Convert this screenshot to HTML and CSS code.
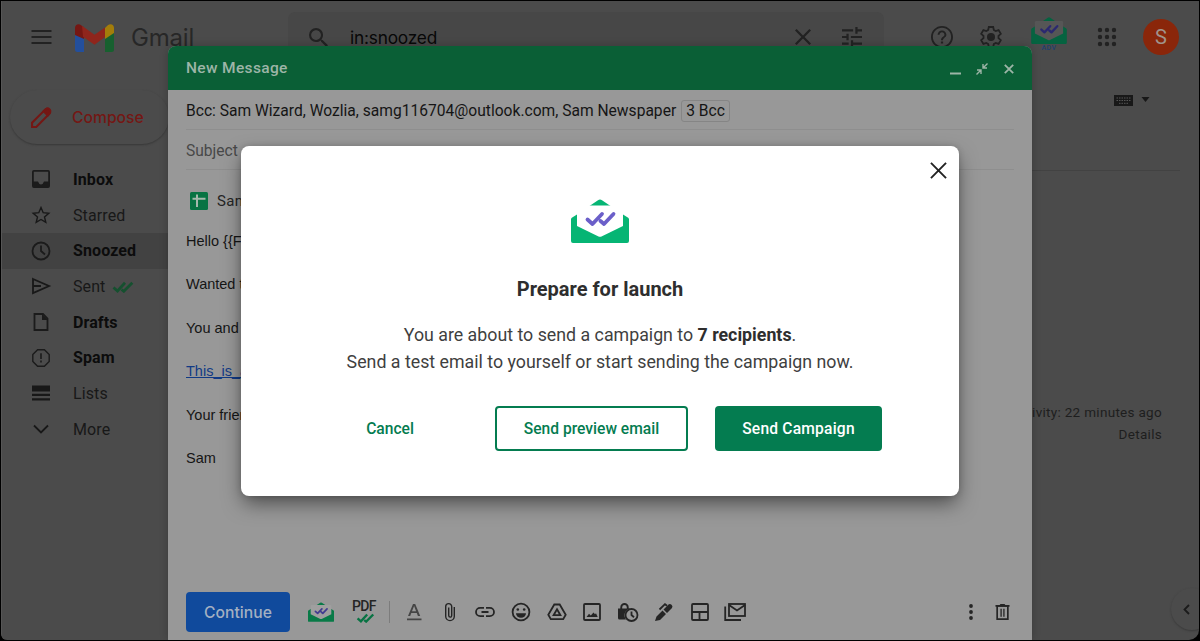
FILE: index.html
```html
<!DOCTYPE html>
<html>
<head>
	<meta charset="utf-8">
	<title>Gmail</title>
	<link rel="stylesheet" href="styles.css">
</head>
<body>
	<svg class="defs">
		<symbol id="envelope" viewBox="0 0 58 44">
			<path class="env-body" d="M17 8L27 1.2Q29 0 31 1.2L41 8zM6 15.5L.8 18.8Q0 19.3 0 20.5V42q0 2 2 2h54q2 0 2-2V20.500q0-1.200-.8-1.700L52 15.500z"/>
			<path class="env-paper" d="M8 6.500H50Q52 6.500 52 8.500V27L30.500 37.500Q29 38.200 27.500 37.500L6 27V8.500Q6 6.500 8 6.500z"/>
			<path class="env-check" d="M16.500 20.500l5 4.500L31 15M29.500 22l3.500 3 9.500-10"/>
		</symbol>
		<symbol id="checks" viewBox="0 0 22 12">
			<path d="M1.500 6.500l4 3.500L13 1.800M9.500 8.500l2.300 1.800 8.500-8.500" fill="none" stroke="currentColor" stroke-width="2.800"/>
		</symbol>
	</svg>

	<div class="app">
		<div class="topbar">
			<svg class="menu" viewBox="0 0 20 14"><path d="M0 1h20M0 7h20M0 13h20"/></svg>
			<svg class="logo" viewBox="0 0 39 29">
				<path fill="#234f9c" d="M0 12h9V29H2.500Q0 29 0 26.500z"/>
				<path fill="#17602f" d="M39 10h-9V29h6.500q2.500 0 2.500-2.500z"/>
				<path fill="#a37d0a" d="M30 5l2.500-2.500C35.500 0 39 1.500 39 5v5l-9 6z"/>
				<path fill="#751713" d="M0 12V5C0 1.500 3.700 0 6.500 2.500L9 4.500V16z"/>
				<path fill="#8f251c" d="M7 2.800l12.500 9L30 4.500V14l-10.500 7.800L8 13.700z"/>
			</svg>
			<span class="brand">Gmail</span>
			<div class="search">
				<svg class="icon" viewBox="3 3 17.500 17.500"><path d="M15.500 14h-.79l-.28-.27A6.470 6.470 0 0 0 16 9.500 6.500 6.500 0 1 0 9.500 16c1.610 0 3.090-.59 4.230-1.570l.27.28v.79l5 4.990L20.490 19l-4.990-5zm-6 0C7.010 14 5 11.990 5 9.500S7.010 5 9.500 5 14 7.010 14 9.500 11.990 14 9.500 14z"/></svg>
				<span class="query">in:snoozed</span>
				<svg class="clear" viewBox="5 5 14 14"><path d="M19 6.410L17.590 5 12 10.590 6.410 5 5 6.410 10.590 12 5 17.590 6.410 19 12 13.410 17.590 19 19 17.590 13.410 12z"/></svg>
				<svg class="tune" viewBox="3 3 18 18"><path d="M3 17v2h6v-2H3zM3 5v2h10V5H3zm10 16v-2h8v-2h-8v-2h-2v6h2zM7 9v2H3v2h4v2h2V9H7zm14 4v-2H11v2h10zm-6-4h2V7h4V5h-4V3h-2v6z"/></svg>
			</div>
			<svg class="help" viewBox="2 2 20 20"><path d="M11 18h2v-2h-2v2zm1-16C6.480 2 2 6.480 2 12s4.480 10 10 10 10-4.480 10-10S17.520 2 12 2zm0 18.300c-4.600 0-8.300-3.700-8.300-8.300S7.400 3.700 12 3.700s8.300 3.700 8.300 8.300-3.700 8.300-8.300 8.300zm0-14.300c-2.210 0-4 1.790-4 4h1.800c0-1.300 1-2.300 2.200-2.300s2.200 1 2.200 2.300c0 2-3.100 1.750-3.100 5h1.800c0-2.250 3.100-2.500 3.100-5 0-2.210-1.790-4-4-4z"/></svg>
			<svg class="gear" viewBox="0 0 24 24">
				<path class="line" d="M9.800 2h4.400l.6 3 1.900 1.100 2.900-1 2.200 3.800-2.300 2v2.200l2.300 2-2.200 3.800-2.900-1-1.900 1.100-.6 3H9.800l-.6-3-1.900-1.100-2.900 1-2.200-3.800 2.300-2v-2.200l-2.300-2 2.200-3.800 2.900 1L9.200 5z"/>
				<circle cx="12" cy="12" r="4"/>
			</svg>
			<div class="adv">
				<svg class="env"><use href="#envelope"/></svg>
				<span>ADV</span>
			</div>
			<svg class="apps" viewBox="0 0 18 18"><path d="M2 2h0M9 2h0M16 2h0M2 9h0M9 9h0M16 9h0M2 16h0M9 16h0M16 16h0"/></svg>
			<span class="avatar">S</span>
		</div>

		<div class="main">
			<div class="sidebar">
				<div class="compose">
					<svg viewBox="0 0 20 20"><path d="M1 19v-4L13.500 2.500q1.500-1.500 3 0l1 1q1.500 1.500 0 3L5 19z"/><path class="tip" d="M12 4l2.500-2.200q1.500-1 3 .4t.5 3L16 8z"/></svg>
					Compose
				</div>
				<ul class="nav">
					<li class="unread"><svg viewBox="0 0 20 20"><rect class="line" x="1.900" y="1.900" width="16.200" height="16.200" rx="1"/><path d="M2 12.500h5q1 3 3 3t3-3h5V18H2z"/></svg>Inbox</li>
					<li><svg viewBox="0 0 20 20"><path class="line thin" d="M10 2.500l2.200 5.200 5.600.5-4.300 3.700 1.300 5.500L10 14.500l-4.800 2.900 1.300-5.500L2.200 8.200l5.600-.5z"/></svg>Starred</li>
					<li class="unread active"><svg viewBox="0 0 20 20"><circle class="line" cx="10" cy="10" r="8.500"/><path class="line" d="M10 4.500V10l4 3.500"/></svg>Snoozed</li>
					<li><svg viewBox="0 0 20 20"><path class="line" d="M2 3l16 7-16 7zM2 10h8"/></svg>Sent<svg class="sent-checks"><use href="#checks"/></svg></li>
					<li class="unread"><svg viewBox="0 0 20 20"><path class="line" d="M3.500 2H12l4.500 4.500V18h-13z"/><path d="M11 2v6h6z"/></svg>Drafts</li>
					<li class="unread"><svg viewBox="0 0 20 20"><path class="line thin" d="M6.600 1.800h6.800l4.800 4.800v6.800l-4.800 4.800H6.600l-4.800-4.800V6.600z"/><path d="M9.200 5.200h1.600V11H9.200zM9.200 12.500h1.600v2H9.200z"/></svg>Spam</li>
					<li><svg viewBox="0 0 20 20"><path d="M1 2.500h18v6H1zM1 10.800h18V13H1zM1 15.300h18v2.200H1z"/></svg>Lists</li>
					<li><svg viewBox="0 0 20 20"><path class="line" d="M3 6.500l7 7 7-7"/></svg>More</li>
				</ul>
			</div>
			<div class="content">
				<div class="tools">
					<svg class="keyboard" viewBox="0 0 19 11"><path d="M0 0h19v11H0z"/><path class="keys" d="M2.500 3h14M2.500 5.500h14M5 8.300h9"/></svg>
					<svg class="caret" viewBox="0 0 8 5"><path d="M0 0h8L4 5z"/></svg>
				</div>
				<div class="activity">
					<div>Last account activity: 22 minutes ago</div>
					<div>Details</div>
				</div>
			</div>
		</div>
		<div class="panel-toggle"><svg viewBox="0 0 7 10"><path class="line" d="M6 .5L1.500 5 6 9.500"/></svg></div>
	</div>

	<div class="message">
		<div class="message-header">
			<span>New Message</span>
			<svg class="min" viewBox="0 0 11 12"><path d="M0 9.500h11v2H0z"/></svg>
			<svg class="shrink" viewBox="0 0 12 12"><path class="line thin" d="M11.500.5L7.500 4.500M7 1v4h4M.5 11.500l4-4M1 7h4v4"/></svg>
			<svg class="shut" viewBox="0 0 10 10"><path class="line" d="M.8.8l8.400 8.400M9.200.8L.8 9.200"/></svg>
		</div>
		<div class="field bcc"><span>Bcc: Sam Wizard, Wozlia, samg116704@outlook.com, Sam Newspaper</span><span class="count">3 Bcc</span></div>
		<div class="field subject">Subject</div>
		<div class="sheet">
			<svg viewBox="0 0 18 18"><rect width="18" height="18" rx="1.500" fill="#087343"/><path d="M7 2.500v12.500M2.500 6.700h13" stroke="#a5b9ad" stroke-width="2"/></svg>
			<span>Sam</span>
		</div>
		<div class="letter">
			<p>Hello {{First</p>
			<p>Wanted to</p>
			<p>You and</p>
			<p><a>This_is_a</a></p>
			<p>Your friend</p>
			<p>Sam</p>
		</div>
		<div class="toolbar">
			<button class="continue">Continue</button>
			<svg class="env"><use href="#envelope"/></svg>
			<div class="pdf">PDF<svg><use href="#checks"/></svg></div>
			<i class="divider"></i>
			<div class="icons">
				<svg viewBox="0 0 20 20"><path d="M9 2h2.200l5 12h-2.300l-1.100-2.900H7.300L6.200 14H4zM8 9.300h4.100L10.100 4zM3 16.500h14.500v1.700H3z" class="soft"/></svg>
				<svg viewBox="0 0 20 20"><path class="line thin" d="M14.300 5v9.300a4.300 4.300 0 0 1-8.600 0V4.600a3 3 0 0 1 6 0v9a1.500 1.500 0 0 1-3 0V5.500"/></svg>
				<svg viewBox="0 0 20 20"><path class="line" d="M9 5.800H5.200a4.200 4.200 0 0 0 0 8.400H9M11 5.800h3.800a4.200 4.200 0 0 1 0 8.400H11M6.500 10h7"/></svg>
				<svg viewBox="0 0 20 20"><circle class="line" cx="10" cy="10" r="8.400"/><circle cx="6.800" cy="7.500" r="1.300"/><circle cx="13.200" cy="7.500" r="1.300"/><path d="M5 11.200h10a5 4.500 0 0 1-10 0z"/></svg>
				<svg viewBox="0 0 20 20"><path class="line" d="M7.300 2.500h5.400l6 10.200-2.500 4.500H3.800l-2.500-4.500z"/><path class="line" d="M10 7.300l3.400 5.900H6.600z"/></svg>
				<svg viewBox="0 0 20 20"><rect class="line" x="2" y="2" width="16" height="16" rx="1"/><path d="M4.500 15l2.500-3.200 1.800 1.700 2.700-3 1.500 1.700 1-1 1.700 3.800z"/></svg>
				<svg class="wide" viewBox="0 0 22 20"><path d="M1 6.500h2.300V5.200a4.200 4.200 0 0 1 8.400 0v1.300h2A6.800 6.800 0 0 0 9 17.500H2.500Q1 17.500 1 16zM5.200 6.500h4.600V5.200a2.300 2.300 0 0 0-4.600 0z"/><circle class="line" cx="14.500" cy="13" r="6"/><path class="line" d="M14.500 9.500V13l2.500 2.200"/></svg>
				<svg viewBox="0 0 20 20"><path d="M1 19l1.500-4.500 6-6 3.500 3.500-6 6zM9.500 7.500l5-5q1.500-1 3 .3 1.700 1.600.5 3.200l-5 5z"/><path class="line" d="M5.500 7.500l5.500-5.300 2 1.500"/></svg>
				<svg viewBox="0 0 20 20"><rect class="line" x="2" y="2" width="16" height="16" rx="1"/><path class="line" d="M2 10h16M9.500 10v8"/></svg>
				<svg class="wide" viewBox="0 0 22 20"><rect class="line" x="5" y="2" width="16" height="12"/><path class="line" d="M5 3l8 5.500L21 3M1.200 4.500V18H17"/></svg>
			</div>
			<svg class="dots" viewBox="0 0 4 16"><circle cx="2" cy="2" r="1.900"/><circle cx="2" cy="8" r="1.900"/><circle cx="2" cy="14" r="1.900"/></svg>
			<svg class="trash" viewBox="0 0 16 18"><path class="line" d="M2.300 2.500h11.400V16.500H2.300z"/><path class="line thin" d="M6.500 5.500v8.500M9.500 5.500v8.500"/><path d="M.5 1.500H5l.8-1h4.400l.8 1h4.500v2H.5z"/></svg>
		</div>
	</div>

	<div class="modal">
		<svg class="close" viewBox="0 0 18 18"><path d="M1 1l16 16M17 1L1 17"/></svg>
		<svg class="env"><use href="#envelope"/></svg>
		<h3>Prepare for launch</h3>
		<p>You are about to send a campaign to <b>7 recipients</b>.<br>Send a test email to yourself or start sending the campaign now.</p>
		<div class="buttons">
			<button class="cancel">Cancel</button>
			<button class="preview">Send preview email</button>
			<button class="send">Send Campaign</button>
		</div>
	</div>
</body>
</html>
```

FILE: styles.css
```css
* {
	box-sizing: border-box;
}
body {
	margin: 0;
	width: 1200px;
	height: 641px;
	overflow: hidden;
	position: relative;
	background-color: #000;
	font-family: Roboto, sans-serif;
	color: #1b1b1b;
}
svg {
	display: block;
	flex: none;
	fill: currentColor;
	overflow: visible;
}
button {
	font-family: inherit;
	border: 0;
	padding: 0;
}
.defs {
	position: absolute;
	width: 0;
	height: 0;
}
.line {
	fill: none;
	stroke: currentColor;
	stroke-width: 1.8;
}
.thin {
	stroke-width: 1.4;
}
.env {
	--body: #087a47;
	--paper: #9f9f9f;
	--check: #413b90;
}
.env-body { fill: var(--body); }
.env-paper { fill: var(--paper); }
.env-check {
	fill: none;
	stroke: var(--check);
	stroke-width: 3.8;
	stroke-linecap: round;
	stroke-linejoin: round;
}

/* mailbox behind the compose window */
.app {
	position: relative;
	margin: 1px 1px 0 1px;
	height: 639px;
	overflow: hidden;
	background-color: #4b4b4b;
	border-radius: 0 0 10px 6px;
	border-left: 1px solid #565656;
}
.topbar {
	display: flex;
	align-items: center;
	height: 72px;
	padding-left: 29px;
	color: #222;
}
.menu {
	width: 21px;
	height: 14px;
	stroke: #222;
	stroke-width: 1.8;
}
.logo {
	width: 39px;
	height: 29px;
	margin-left: 23px;
}
.brand {
	width: 157px;
	margin-left: 17px;
	font-family: Inter, sans-serif;
	font-size: 24px;
	letter-spacing: -0.2px;
	color: #272727;
}
.search {
	display: flex;
	align-items: center;
	width: 596px;
	height: 50px;
	padding-left: 21px;
	background-color: #474747;
	border-radius: 7px;
}
.search .icon {
	width: 19px;
	height: 19px;
}
.query {
	width: 445px;
	margin-left: 22px;
	font-family: Inter, sans-serif;
	font-size: 17.3px;
	letter-spacing: -0.2px;
	color: #080808;
}
.clear {
	width: 16px;
	height: 16px;
}
.tune {
	width: 20px;
	height: 20px;
	margin-left: 31px;
}
.help {
	width: 22px;
	height: 22px;
	margin-left: 47px;
}
.gear {
	width: 24px;
	height: 24px;
	margin-left: 26px;
}
.adv {
	width: 36px;
	margin: -4px 0 0 28px;
	font-size: 7px;
	font-weight: 500;
	line-height: 9px;
	letter-spacing: .5px;
	text-align: center;
	color: #1d4070;
}
.adv .env {
	width: 36px;
	height: 27px;
	--body: #056340;
	--paper: #565656;
	--check: #2b2870;
}
.apps {
	width: 18px;
	height: 18px;
	margin-left: 31px;
	stroke: currentColor;
	stroke-width: 4.4;
	stroke-linecap: round;
}
.avatar {
	width: 36px;
	height: 36px;
	margin-left: 27px;
	border-radius: 50%;
	background-color: #8a260a;
	color: #a0938c;
	font-size: 20px;
	line-height: 36px;
	text-align: center;
}
.main {
	display: flex;
}
.sidebar {
	width: 167px;
	padding-top: 17px;
}
.compose {
	display: flex;
	align-items: center;
	width: 159px;
	height: 54px;
	margin-left: 8px;
	padding-left: 21px;
	border-radius: 27px;
	box-shadow: 0 1px 2px #383838;
	font-family: Inter, sans-serif;
	font-size: 15.7px;
	font-weight: 500;
	color: #741714;
}
.compose svg {
	width: 21px;
	height: 21px;
	margin-right: 20px;
	fill: none;
	stroke: #741714;
	stroke-width: 2;
}
.compose .tip {
	fill: #741714;
}
.nav {
	margin: 17.5px 0 0;
	padding: 0;
	list-style: none;
}
.nav li {
	display: flex;
	align-items: center;
	height: 35.7px;
	padding-left: 29px;
	font-size: 16px;
	letter-spacing: .1px;
	color: #181818;
}
.nav svg {
	width: 20px;
	height: 20px;
	margin-right: 22px;
}
.nav .sent-checks {
	width: 22px;
	height: 12px;
	margin: 2px 0 0 7px;
	color: #15502f;
}
.nav .unread {
	font-weight: 700;
	color: #0c0c0c;
}
.nav .unread svg {
	color: #1b1b1b;
}
.nav .active {
	background-color: #424242;
}
.content {
	flex: 1;
	padding-right: 37px;
}
.tools {
	display: flex;
	align-items: center;
	justify-content: flex-end;
	height: 98px;
	margin-right: -18px;
	padding: 0 30px 42px 0;
	border-bottom: 1px solid #424242;
	color: #181818;
}
.keyboard {
	width: 19px;
	height: 11px;
}
.keys {
	stroke: #555;
	stroke-width: 1;
	stroke-dasharray: 1.5 1;
}
.caret {
	width: 9px;
	height: 5px;
	margin: -3px 0 0 8px;
}
.activity {
	margin-top: 230px;
	font-size: 13.5px;
	line-height: 22px;
	letter-spacing: .3px;
	text-align: right;
	color: #1e1e1e;
}
.panel-toggle {
	position: absolute;
	right: -14px;
	bottom: 10px;
	display: flex;
	align-items: center;
	width: 42px;
	height: 42px;
	padding-left: 12px;
	border-radius: 50%;
	box-shadow: 0 1px 2px #3a3a3a;
}
.panel-toggle svg {
	width: 7px;
	height: 11px;
}

/* compose window */
.message {
	position: absolute;
	left: 168px;
	top: 46px;
	display: flex;
	flex-direction: column;
	width: 864px;
	height: 594px;
	border-radius: 8px 8px 0 0;
	background-color: #989898;
	box-shadow: 0 0 9px rgba(0, 0, 0, .22);
	clip-path: inset(-12px -12px 0 -12px);
	color: #151515;
}
.message-header {
	display: flex;
	align-items: center;
	height: 44px;
	padding: 0 18px;
	border-radius: 8px 8px 0 0;
	background-color: #0a5f36;
	font-size: 15.5px;
	font-weight: 500;
	letter-spacing: .35px;
	color: #9db5a7;
}
.message-header span {
	flex: 1;
}
.message-header svg {
	margin-top: 1px;
}
.min {
	width: 11px;
	height: 12px;
}
.shrink {
	width: 12px;
	height: 12px;
	margin-left: 15px;
}
.shut {
	width: 10px;
	height: 10px;
	margin-left: 16px;
}
.field {
	display: flex;
	align-items: center;
	height: 40px;
	margin: 0 18px;
	padding-top: 2px;
	border-bottom: 1px solid #8e8e8e;
	font-size: 15.6px;
}
.subject {
	color: #484848;
}
.count {
	margin-left: 5px;
	padding: 0 4px;
	border: 1px solid #858585;
	border-radius: 3px;
	line-height: 20px;
}
.sheet {
	display: flex;
	align-items: center;
	height: 62px;
	padding-left: 22px;
	font-size: 15px;
	letter-spacing: .3px;
	color: #252525;
}
.sheet svg {
	width: 18px;
	height: 18px;
	margin-right: 9px;
}
.letter {
	flex: 1;
	margin: -12.5px 18px 0;
	font-family: "Liberation Sans", sans-serif;
	font-size: 14.5px;
}
.letter p {
	margin: 0;
	line-height: 43.5px;
}
.letter a {
	color: #113a85;
	text-decoration: underline;
}
.toolbar {
	display: flex;
	align-items: center;
	height: 40px;
	margin: 0 22px 8px 18px;
	color: #252525;
}
.continue {
	width: 104px;
	height: 40px;
	border-radius: 4px;
	background-color: #104a9c;
	color: #a3b0c2;
	font-family: Inter, sans-serif;
	font-size: 15.7px;
	font-weight: 500;
}
.toolbar .env {
	width: 26px;
	height: 20px;
	margin-left: 18px;
}
.pdf {
	width: 26px;
	margin: -3px 0 0 17px;
	font-size: 14px;
	font-weight: 500;
	line-height: 14px;
	letter-spacing: -0.6px;
	text-align: center;
}
.pdf svg {
	width: 19px;
	height: 10px;
	margin-left: 5px;
	color: #087343;
}
.divider {
	width: 1px;
	height: 22px;
	margin: 0 14px 0 12px;
	background-color: #7c7c7c;
}
.icons {
	display: flex;
	flex: 1;
	gap: 15.7px;
	margin-top: -1px;
}
.icons svg {
	width: 20px;
	height: 20px;
}
.icons .wide {
	width: 22px;
	margin: 0 -1px;
}
.soft {
	fill: #454545;
}
.dots {
	width: 4px;
	height: 16px;
	margin: -1px 22px 0 0;
}
.trash {
	width: 15px;
	height: 18px;
	margin-top: -1px;
}

/* confirm dialog */
.modal {
	position: absolute;
	left: 241px;
	top: 146px;
	width: 718px;
	height: 350px;
	padding-top: 53px;
	border-radius: 8px;
	background-color: #fff;
	box-shadow: 0 9px 20px -2px rgba(0, 0, 0, .5), 0 0 6px rgba(0, 0, 0, .15);
	text-align: center;
}
.modal .env {
	width: 58px;
	height: 44px;
	margin: 0 auto;
	--body: #06b574;
	--paper: #fff;
	--check: #6b5fc9;
}
.close {
	position: absolute;
	right: 12px;
	top: 16px;
	width: 17px;
	height: 17px;
	stroke: #222;
	stroke-width: 2;
}
.modal h3 {
	margin: 33px 0 0;
	font-size: 20px;
	line-height: 26px;
	font-weight: 700;
	color: #2e2e2e;
}
.modal p {
	margin: 19px 0 0;
	font-size: 17.8px;
	line-height: 27px;
	color: #3f3f3f;
}
.modal b {
	color: #2e2e2e;
}
.buttons {
	display: flex;
	margin: 31px 77px 0 101px;
}
.buttons button {
	height: 45px;
	border-radius: 4px;
	background-color: #fff;
	font-size: 15.6px;
	font-weight: 500;
	color: #047c50;
}
.buttons .cancel {
	width: 96px;
}
.buttons .preview {
	width: 193px;
	margin: 0 27px 0 57px;
	border: 2px solid #047c50;
}
.buttons .send {
	width: 167px;
	background-color: #047c50;
	color: #fff;
	letter-spacing: .2px;
}
```
